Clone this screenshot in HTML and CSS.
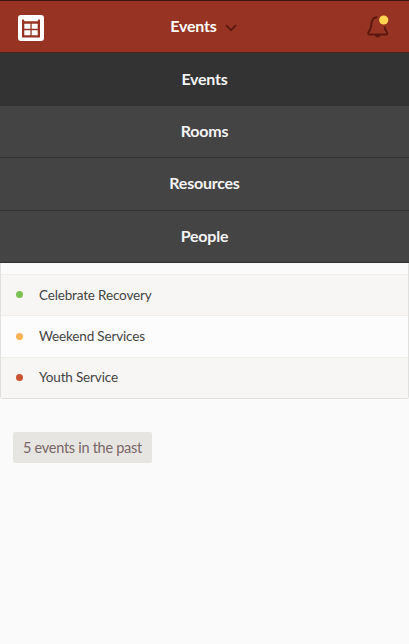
FILE: index.html
```
<!DOCTYPE html>
<html lang="en">
<head>
<meta charset="utf-8">
<title>Events</title>
<link rel="stylesheet" href="styles.css">
</head>
<body>
<header class="topbar">
  <svg class="logo" width="26" height="26" viewBox="0 0 26 26">
    <rect width="26" height="26" rx="3" fill="#fff"/>
    <path d="M4 4.500h1.500L6.500 6.200h13l1-1.700H22V22.500H4z" fill="#963322"/>
    <path d="M6.300 8.800H12.400v5H6.300zM13.700 8.800h6v5h-6zM6.300 15.200H12.400v5H6.300zM13.700 15.200h6v5h-6z" fill="#fff"/>
  </svg>
  <div class="title">
    <span>Events</span>
    <svg width="12" height="8" viewBox="0 0 12 8" fill="none" stroke="#5c180f" stroke-width="1.700"><path d="M1 1.200l5 5 5-5"/></svg>
  </div>
  <svg class="bell" width="24" height="24" viewBox="0 0 24 24">
    <path d="M10.500 2.200C7 2.800 5.700 5.300 5.500 8.200 5.200 13 4.700 14.500 2.400 17.200 1.700 18.300 2.200 19.500 3.200 19.500h17c1.200 0 1.500-1.300.8-2.300-1.200-1.600-2-2.500-2.300-4.700" fill="none" stroke="#5c180f" stroke-width="1.900" stroke-linecap="round"/>
    <path d="M8.700 20h6c-.5 3.200-5.500 3.200-6 0z" fill="#5c180f"/>
    <circle cx="17.700" cy="5" r="4.600" fill="#ffd450"/>
  </svg>
</header>
<nav class="menu">
  <a class="item active">Events</a>
  <a class="item">Rooms</a>
  <a class="item">Resources</a>
  <a class="item">People</a>
</nav>
<main>
  <ul class="list">
    <li class="spacer"></li>
    <li class="row"><i class="dot green"></i>Celebrate Recovery</li>
    <li class="row white"><i class="dot orange"></i>Weekend Services</li>
    <li class="row"><i class="dot red"></i>Youth Service</li>
  </ul>
  <a class="past">5 events in the past</a>
</main>
</body>
</html>
```
FILE: styles.css
```
* { box-sizing: border-box; }
body { margin: 0; height: 644px; overflow: hidden; background: #fafafa; font-family: Lato, sans-serif; color: #444; }
.topbar { height: 53px; padding: 0 19px 0 18px; display: grid; grid-template-columns: 26px 1fr 24px; align-items: center; background: #963322; border-top: 1px solid #3a1711; border-bottom: 1px solid #4b241c; }
.logo { margin-top: 2px; }
.bell { margin-top: 1px; }
.title { display: flex; align-items: center; justify-content: center; gap: 8px; margin-left: -3px; margin-top: -1px; color: #fff; font-size: 16px; font-weight: 700; line-height: 20px; letter-spacing: -0.2px; }
.title svg { margin-top: 3px; }
.menu { height: 210px; border-bottom: 1px solid #303030; background: #444; }
.item { display: flex; height: 52.200px; padding-bottom: 2px; align-items: center; justify-content: center; background: #444; border-top: 1px solid #333; color: #f4f4f4; font-size: 16px; font-weight: 700; letter-spacing: -0.240px; }
.item.active { background: #333; }
.list { list-style: none; margin: 0; padding: 0; border: 1px solid #e0e0de; border-top: 0; border-radius: 0 0 3px 3px; background: #fcfbfc; }
.spacer { height: 11px; }
.row { display: flex; align-items: center; height: 41.400px; padding-left: 15px; padding-bottom: 1px; gap: 16px; border-top: 1px solid #efeeeb; background: #f7f6f4; font-size: 13.500px; letter-spacing: -0.160px; }
.row.white { background: #fdfcfd; }
.dot { width: 7px; height: 7px; border-radius: 50%; }
.green { background: #7cc052; }
.orange { background: #fbb254; }
.red { background: #cc5233; }
.past { display: inline-flex; align-items: center; justify-content: center; width: 139px; height: 31px; margin: 33px 0 0 13px; border-radius: 2px; background: #e7e5e1; color: #776767; font-size: 14.500px; letter-spacing: -0.280px; }
```
